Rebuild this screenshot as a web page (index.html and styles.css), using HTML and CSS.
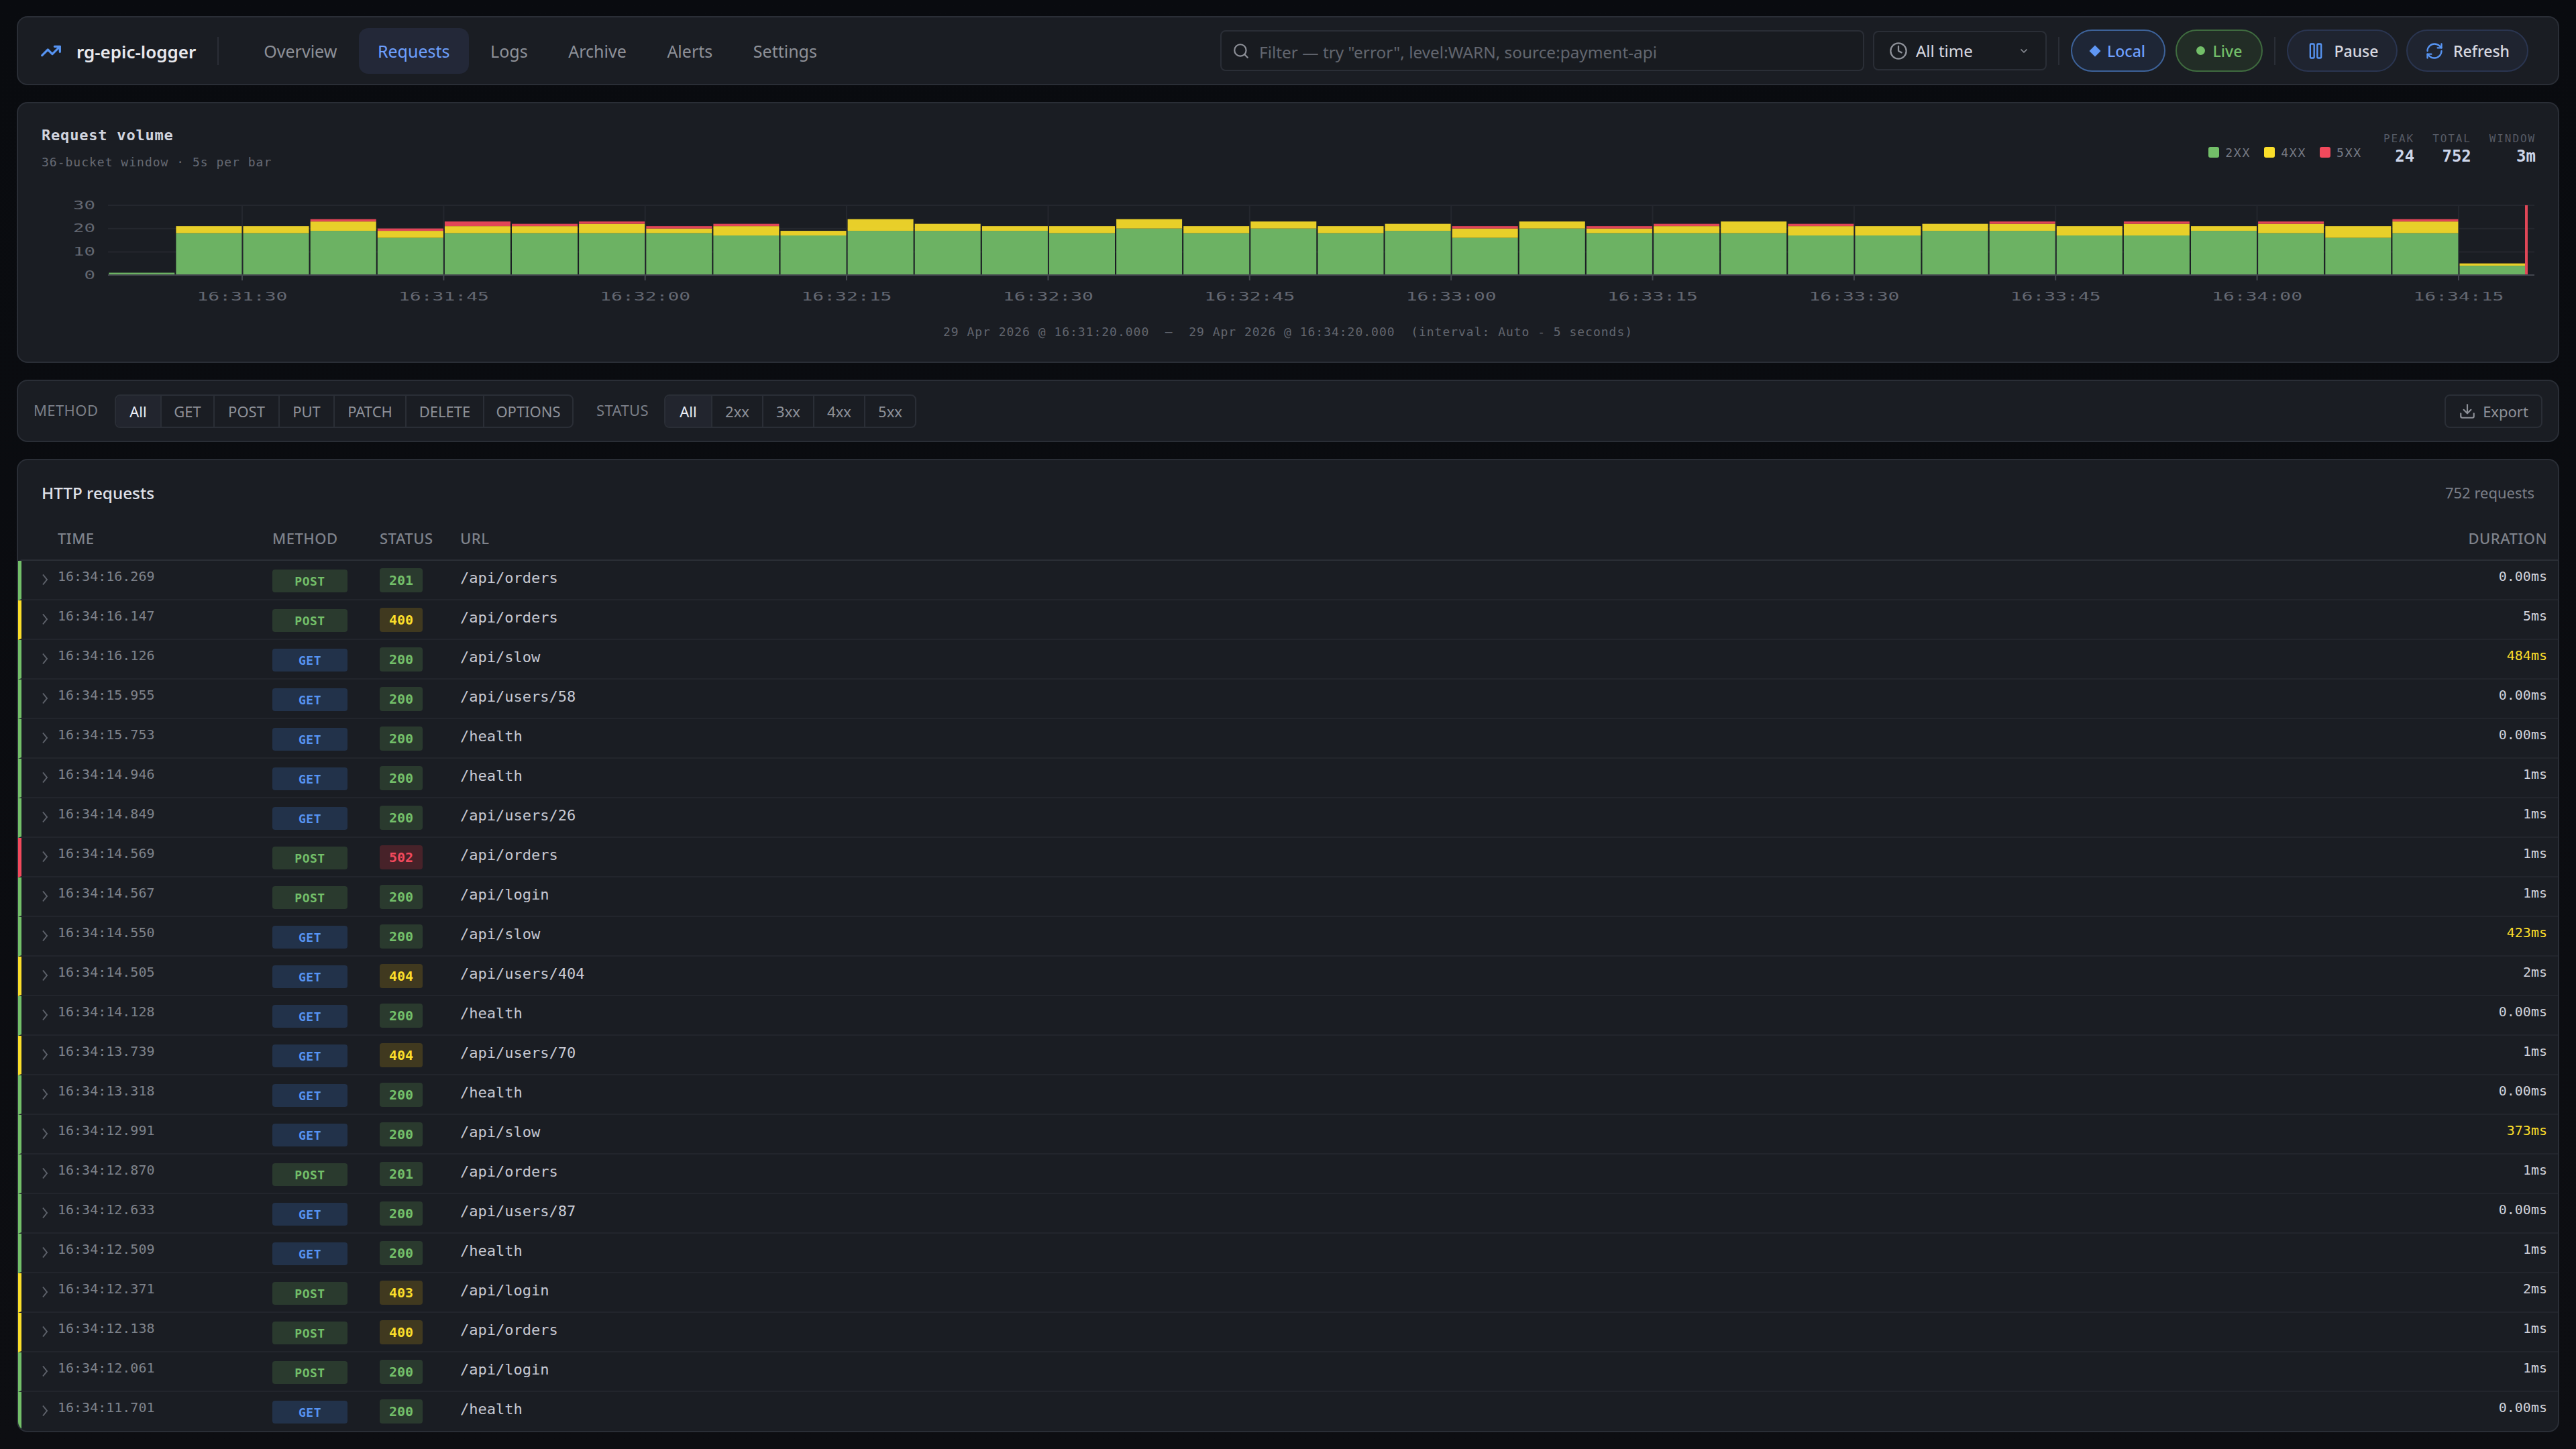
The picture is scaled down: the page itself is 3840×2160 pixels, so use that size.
FILE: index.html
```html
<!DOCTYPE html>
<html lang="en">
<head>
<meta charset="utf-8">
<title>rg-epic-logger</title>
<link rel="stylesheet" href="styles.css">
</head>
<body>
<svg class="defs" width="0" height="0" aria-hidden="true">
  <symbol id="chev" viewBox="0 0 10 18"><path d="M2 1.5 8 9 2 16.500" fill="none" stroke="currentColor" stroke-width="2"/></symbol>
</svg>

<header class="panel topbar">
  <div class="brand">
    <svg class="brand-icon" viewBox="0 0 24 24" fill="none" stroke="currentColor" stroke-width="2.4" stroke-linecap="round" stroke-linejoin="round"><polyline points="22 7 13.500 15.500 8.500 10.500 2 17"/><polyline points="16 7 22 7 22 13"/></svg>
    <span>rg-epic-logger</span>
  </div>
  <div class="divider brand-divider"></div>
  <nav class="nav">
    <a>Overview</a><a class="active">Requests</a><a>Logs</a><a>Archive</a><a>Alerts</a><a>Settings</a>
  </nav>
  <div class="search">
    <svg class="icon-search" viewBox="0 0 24 24" fill="none" stroke="currentColor" stroke-width="2" stroke-linecap="round"><circle cx="11" cy="11" r="8"/><path d="m21 21-4.300-4.300"/></svg>
    <span>Filter — try "error", level:WARN, source:payment-api</span>
  </div>
  <div class="select">
    <svg class="icon-clock" viewBox="0 0 24 24" fill="none" stroke="currentColor" stroke-width="2" stroke-linecap="round" stroke-linejoin="round"><circle cx="12" cy="12" r="10"/><polyline points="12 6 12 12 16 14"/></svg>
    <span>All time</span>
    <svg class="icon-caret" viewBox="0 0 24 24" fill="none" stroke="currentColor" stroke-width="2.500" stroke-linecap="round" stroke-linejoin="round"><path d="m6 9 6 6 6-6"/></svg>
  </div>
  <div class="divider d1"></div>
  <button class="pill local"><i class="diamond"></i>Local</button>
  <button class="pill live"><i class="dot"></i>Live</button>
  <div class="divider d2"></div>
  <button class="pill action pause">
    <svg viewBox="0 0 24 24" fill="none" stroke="#5794f2" stroke-width="2" stroke-linejoin="round"><rect x="5" y="3" width="5" height="18" rx="1"/><rect x="14" y="3" width="5" height="18" rx="1"/></svg>Pause</button>
  <button class="pill action refresh">
    <svg viewBox="0 0 24 24" fill="none" stroke="#5794f2" stroke-width="2" stroke-linecap="round" stroke-linejoin="round"><path d="M3 12a9 9 0 0 1 9-9 9.750 9.750 0 0 1 6.740 2.740L21 8"/><path d="M21 3v5h-5"/><path d="M21 12a9 9 0 0 1-9 9 9.750 9.750 0 0 1-6.740-2.740L3 16"/><path d="M8 16H3v5"/></svg>Refresh</button>
</header>

<section class="panel chart">
  <div class="chart-head">
    <div>
      <h2>Request volume</h2>
      <p>36-bucket window · 5s per bar</p>
    </div>
    <div class="chart-meta">
      <ul class="legend">
        <li><i class="sw-g"></i>2XX</li><li><i class="sw-y"></i>4XX</li><li><i class="sw-r"></i>5XX</li>
      </ul>
      <dl class="stat peak"><dt>PEAK</dt><dd>24</dd></dl>
      <dl class="stat"><dt>TOTAL</dt><dd>752</dd></dl>
      <dl class="stat"><dt>WINDOW</dt><dd>3m</dd></dl>
    </div>
  </div>
  <svg class="plot" viewBox="27 290 3786 180" width="3786" height="180">
    <g class="grid">
      <path d="M161 306H3778M161 340.700H3778M161 375.400H3778"/>
      <path d="M361 306V410M661.400 306V410M961.700 306V410M1262 306V410M1562.500 306V410M1862.800 306V410M2163.200 306V410M2463.500 306V410M2763.900 306V410M3064.200 306V410M3364.600 306V410M3665 306V410"/>
    </g>
    <g transform="translate(0 410) scale(1 -3.47)">
      <rect class="g" x="162.300" width="98" height="1"/>
      <rect class="g" x="262.400" width="98" height="18"/><rect class="y" x="262.400" y="18" width="98" height="3"/>
      <rect class="g" x="362.500" width="98" height="18"/><rect class="y" x="362.500" y="18" width="98" height="3"/>
      <rect class="g" x="462.700" width="98" height="19"/><rect class="y" x="462.700" y="19" width="98" height="4"/><rect class="r" x="462.700" y="23" width="98" height="1"/>
      <rect class="g" x="562.800" width="98" height="16"/><rect class="y" x="562.800" y="16" width="98" height="3"/><rect class="r" x="562.800" y="19" width="98" height="1"/>
      <rect class="g" x="662.900" width="98" height="18"/><rect class="y" x="662.900" y="18" width="98" height="3"/><rect class="r" x="662.900" y="21" width="98" height="2"/>
      <rect class="g" x="763" width="98" height="18"/><rect class="y" x="763" y="18" width="98" height="3"/><rect class="r" x="763" y="21" width="98" height="1"/>
      <rect class="g" x="863.100" width="98" height="18"/><rect class="y" x="863.100" y="18" width="98" height="4"/><rect class="r" x="863.100" y="22" width="98" height="1"/>
      <rect class="g" x="963.300" width="98" height="18"/><rect class="y" x="963.300" y="18" width="98" height="2"/><rect class="r" x="963.300" y="20" width="98" height="1"/>
      <rect class="g" x="1063.400" width="98" height="17"/><rect class="y" x="1063.400" y="17" width="98" height="4"/><rect class="r" x="1063.400" y="21" width="98" height="1"/>
      <rect class="g" x="1163.500" width="98" height="17"/><rect class="y" x="1163.500" y="17" width="98" height="2"/>
      <rect class="g" x="1263.600" width="98" height="19"/><rect class="y" x="1263.600" y="19" width="98" height="5"/>
      <rect class="g" x="1363.700" width="98" height="19"/><rect class="y" x="1363.700" y="19" width="98" height="3"/>
      <rect class="g" x="1463.900" width="98" height="19"/><rect class="y" x="1463.900" y="19" width="98" height="2"/>
      <rect class="g" x="1564" width="98" height="18"/><rect class="y" x="1564" y="18" width="98" height="3"/>
      <rect class="g" x="1664.100" width="98" height="20"/><rect class="y" x="1664.100" y="20" width="98" height="4"/>
      <rect class="g" x="1764.200" width="98" height="18"/><rect class="y" x="1764.200" y="18" width="98" height="3"/>
      <rect class="g" x="1864.300" width="98" height="20"/><rect class="y" x="1864.300" y="20" width="98" height="3"/>
      <rect class="g" x="1964.500" width="98" height="18"/><rect class="y" x="1964.500" y="18" width="98" height="3"/>
      <rect class="g" x="2064.600" width="98" height="19"/><rect class="y" x="2064.600" y="19" width="98" height="3"/>
      <rect class="g" x="2164.700" width="98" height="16"/><rect class="y" x="2164.700" y="16" width="98" height="4"/><rect class="r" x="2164.700" y="20" width="98" height="1"/>
      <rect class="g" x="2264.800" width="98" height="20"/><rect class="y" x="2264.800" y="20" width="98" height="3"/>
      <rect class="g" x="2364.900" width="98" height="18"/><rect class="y" x="2364.900" y="18" width="98" height="2"/><rect class="r" x="2364.900" y="20" width="98" height="1"/>
      <rect class="g" x="2465.100" width="98" height="18"/><rect class="y" x="2465.100" y="18" width="98" height="3"/><rect class="r" x="2465.100" y="21" width="98" height="1"/>
      <rect class="g" x="2565.200" width="98" height="18"/><rect class="y" x="2565.200" y="18" width="98" height="5"/>
      <rect class="g" x="2665.300" width="98" height="17"/><rect class="y" x="2665.300" y="17" width="98" height="4"/><rect class="r" x="2665.300" y="21" width="98" height="1"/>
      <rect class="g" x="2765.400" width="98" height="17"/><rect class="y" x="2765.400" y="17" width="98" height="4"/>
      <rect class="g" x="2865.500" width="98" height="19"/><rect class="y" x="2865.500" y="19" width="98" height="3"/>
      <rect class="g" x="2965.700" width="98" height="19"/><rect class="y" x="2965.700" y="19" width="98" height="3"/><rect class="r" x="2965.700" y="22" width="98" height="1"/>
      <rect class="g" x="3065.800" width="98" height="17"/><rect class="y" x="3065.800" y="17" width="98" height="4"/>
      <rect class="g" x="3165.900" width="98" height="17"/><rect class="y" x="3165.900" y="17" width="98" height="5"/><rect class="r" x="3165.900" y="22" width="98" height="1"/>
      <rect class="g" x="3266" width="98" height="19"/><rect class="y" x="3266" y="19" width="98" height="2"/>
      <rect class="g" x="3366.100" width="98" height="18"/><rect class="y" x="3366.100" y="18" width="98" height="4"/><rect class="r" x="3366.100" y="22" width="98" height="1"/>
      <rect class="g" x="3466.300" width="98" height="16"/><rect class="y" x="3466.300" y="16" width="98" height="5"/>
      <rect class="g" x="3566.400" width="98" height="18"/><rect class="y" x="3566.400" y="18" width="98" height="5"/><rect class="r" x="3566.400" y="23" width="98" height="1"/>
      <rect class="g" x="3666.500" width="97.500" height="4"/><rect class="y" x="3666.500" y="4" width="97.500" height="1"/>
    </g>
    <rect class="now" x="3764" y="306" width="4" height="104"/>
    <g class="axis">
      <path d="M161 410H3778"/>
      <path d="M361 410v8M661.400 410v8M961.700 410v8M1262 410v8M1562.500 410v8M1862.800 410v8M2163.200 410v8M2463.500 410v8M2763.900 410v8M3064.200 410v8M3364.600 410v8M3665 410v8"/>
    </g>
    <g class="ylabels">
      <text x="142" y="312" textLength="33" lengthAdjust="spacingAndGlyphs">30</text>
      <text x="142" y="346" textLength="33" lengthAdjust="spacingAndGlyphs">20</text>
      <text x="142" y="381" textLength="33" lengthAdjust="spacingAndGlyphs">10</text>
      <text x="142" y="416" textLength="16.500" lengthAdjust="spacingAndGlyphs">0</text>
    </g>
    <g class="xlabels">
      <text x="361" y="448" textLength="135" lengthAdjust="spacingAndGlyphs">16:31:30</text>
      <text x="661.400" y="448" textLength="135" lengthAdjust="spacingAndGlyphs">16:31:45</text>
      <text x="961.700" y="448" textLength="135" lengthAdjust="spacingAndGlyphs">16:32:00</text>
      <text x="1262" y="448" textLength="135" lengthAdjust="spacingAndGlyphs">16:32:15</text>
      <text x="1562.500" y="448" textLength="135" lengthAdjust="spacingAndGlyphs">16:32:30</text>
      <text x="1862.800" y="448" textLength="135" lengthAdjust="spacingAndGlyphs">16:32:45</text>
      <text x="2163.200" y="448" textLength="135" lengthAdjust="spacingAndGlyphs">16:33:00</text>
      <text x="2463.500" y="448" textLength="135" lengthAdjust="spacingAndGlyphs">16:33:15</text>
      <text x="2763.900" y="448" textLength="135" lengthAdjust="spacingAndGlyphs">16:33:30</text>
      <text x="3064.200" y="448" textLength="135" lengthAdjust="spacingAndGlyphs">16:33:45</text>
      <text x="3364.600" y="448" textLength="135" lengthAdjust="spacingAndGlyphs">16:34:00</text>
      <text x="3665" y="448" textLength="135" lengthAdjust="spacingAndGlyphs">16:34:15</text>
    </g>
  </svg>
  <p class="chart-foot">29 Apr 2026 @ 16:31:20.000 &nbsp;—&nbsp; 29 Apr 2026 @ 16:34:20.000 &nbsp;(interval: Auto - 5 seconds)</p>
</section>

<section class="panel filters">
  <span class="filter-label">METHOD</span>
  <div class="seg method-seg"><button class="on">All</button><button>GET</button><button>POST</button><button>PUT</button><button>PATCH</button><button>DELETE</button><button>OPTIONS</button></div>
  <span class="filter-label status-label">STATUS</span>
  <div class="seg status-seg"><button class="on">All</button><button>2xx</button><button>3xx</button><button>4xx</button><button>5xx</button></div>
  <button class="export">
    <svg viewBox="0 0 24 24" fill="none" stroke="currentColor" stroke-width="2" stroke-linecap="round" stroke-linejoin="round"><path d="M21 15v4a2 2 0 0 1-2 2H5a2 2 0 0 1-2-2v-4"/><polyline points="7 10 12 15 17 10"/><line x1="12" y1="15" x2="12" y2="3"/></svg>Export</button>
</section>

<section class="panel requests">
  <div class="req-head"><h2>HTTP requests</h2><span>752 requests</span></div>
  <div class="row thead"><span></span><span>TIME</span><span>METHOD</span><span>STATUS</span><span>URL</span><span class="dur-h">DURATION</span></div>
  <div class="row l-g"><svg class="chev"><use href="#chev"/></svg><span class="time">16:34:16.269</span><span class="m post">POST</span><span class="s ok">201</span><span class="url">/api/orders</span><span class="dur">0.00ms</span></div>
  <div class="row l-y"><svg class="chev"><use href="#chev"/></svg><span class="time">16:34:16.147</span><span class="m post">POST</span><span class="s warn">400</span><span class="url">/api/orders</span><span class="dur">5ms</span></div>
  <div class="row l-g"><svg class="chev"><use href="#chev"/></svg><span class="time">16:34:16.126</span><span class="m get">GET</span><span class="s ok">200</span><span class="url">/api/slow</span><span class="dur slow">484ms</span></div>
  <div class="row l-g"><svg class="chev"><use href="#chev"/></svg><span class="time">16:34:15.955</span><span class="m get">GET</span><span class="s ok">200</span><span class="url">/api/users/58</span><span class="dur">0.00ms</span></div>
  <div class="row l-g"><svg class="chev"><use href="#chev"/></svg><span class="time">16:34:15.753</span><span class="m get">GET</span><span class="s ok">200</span><span class="url">/health</span><span class="dur">0.00ms</span></div>
  <div class="row l-g"><svg class="chev"><use href="#chev"/></svg><span class="time">16:34:14.946</span><span class="m get">GET</span><span class="s ok">200</span><span class="url">/health</span><span class="dur">1ms</span></div>
  <div class="row l-g"><svg class="chev"><use href="#chev"/></svg><span class="time">16:34:14.849</span><span class="m get">GET</span><span class="s ok">200</span><span class="url">/api/users/26</span><span class="dur">1ms</span></div>
  <div class="row l-r"><svg class="chev"><use href="#chev"/></svg><span class="time">16:34:14.569</span><span class="m post">POST</span><span class="s err">502</span><span class="url">/api/orders</span><span class="dur">1ms</span></div>
  <div class="row l-g"><svg class="chev"><use href="#chev"/></svg><span class="time">16:34:14.567</span><span class="m post">POST</span><span class="s ok">200</span><span class="url">/api/login</span><span class="dur">1ms</span></div>
  <div class="row l-g"><svg class="chev"><use href="#chev"/></svg><span class="time">16:34:14.550</span><span class="m get">GET</span><span class="s ok">200</span><span class="url">/api/slow</span><span class="dur slow">423ms</span></div>
  <div class="row l-y"><svg class="chev"><use href="#chev"/></svg><span class="time">16:34:14.505</span><span class="m get">GET</span><span class="s warn">404</span><span class="url">/api/users/404</span><span class="dur">2ms</span></div>
  <div class="row l-g"><svg class="chev"><use href="#chev"/></svg><span class="time">16:34:14.128</span><span class="m get">GET</span><span class="s ok">200</span><span class="url">/health</span><span class="dur">0.00ms</span></div>
  <div class="row l-y"><svg class="chev"><use href="#chev"/></svg><span class="time">16:34:13.739</span><span class="m get">GET</span><span class="s warn">404</span><span class="url">/api/users/70</span><span class="dur">1ms</span></div>
  <div class="row l-g"><svg class="chev"><use href="#chev"/></svg><span class="time">16:34:13.318</span><span class="m get">GET</span><span class="s ok">200</span><span class="url">/health</span><span class="dur">0.00ms</span></div>
  <div class="row l-g"><svg class="chev"><use href="#chev"/></svg><span class="time">16:34:12.991</span><span class="m get">GET</span><span class="s ok">200</span><span class="url">/api/slow</span><span class="dur slow">373ms</span></div>
  <div class="row l-g"><svg class="chev"><use href="#chev"/></svg><span class="time">16:34:12.870</span><span class="m post">POST</span><span class="s ok">201</span><span class="url">/api/orders</span><span class="dur">1ms</span></div>
  <div class="row l-g"><svg class="chev"><use href="#chev"/></svg><span class="time">16:34:12.633</span><span class="m get">GET</span><span class="s ok">200</span><span class="url">/api/users/87</span><span class="dur">0.00ms</span></div>
  <div class="row l-g"><svg class="chev"><use href="#chev"/></svg><span class="time">16:34:12.509</span><span class="m get">GET</span><span class="s ok">200</span><span class="url">/health</span><span class="dur">1ms</span></div>
  <div class="row l-y"><svg class="chev"><use href="#chev"/></svg><span class="time">16:34:12.371</span><span class="m post">POST</span><span class="s warn">403</span><span class="url">/api/login</span><span class="dur">2ms</span></div>
  <div class="row l-y"><svg class="chev"><use href="#chev"/></svg><span class="time">16:34:12.138</span><span class="m post">POST</span><span class="s warn">400</span><span class="url">/api/orders</span><span class="dur">1ms</span></div>
  <div class="row l-g"><svg class="chev"><use href="#chev"/></svg><span class="time">16:34:12.061</span><span class="m post">POST</span><span class="s ok">200</span><span class="url">/api/login</span><span class="dur">1ms</span></div>
  <div class="row l-g last"><svg class="chev"><use href="#chev"/></svg><span class="time">16:34:11.701</span><span class="m get">GET</span><span class="s ok">200</span><span class="url">/health</span><span class="dur">0.00ms</span></div>
</section>
</body>
</html>
```

FILE: styles.css
```css
* { box-sizing: border-box; }
html, body { margin: 0; height: 100%; }
body {
  width: 3840px; height: 2160px; overflow: hidden;
  padding: 24px 25px 25px;
  display: flex; flex-direction: column; gap: 25px;
  background: linear-gradient(180deg, #090b0f, #0d0e12);
  font-family: "Noto Sans", "Open Sans", sans-serif;
  color: #d8d9da;
}
button { font: inherit; color: inherit; background: none; border: 0; padding: 0; }
h2, p, ul, dl, dd { margin: 0; padding: 0; }
.defs { position: absolute; }
.panel { background: #1a1d23; border: 2px solid #2a2e36; border-radius: 16px; }

/* top bar */
.topbar { display: flex; align-items: center; height: 103px; padding: 0 44px 0 33px; flex: none; }
.brand { display: flex; align-items: center; gap: 22px; font-size: 26px; font-weight: 600; color: #e8e9ee; }
.brand span { padding-top: 2px; }
.brand-icon { width: 32px; height: 32px; color: #5794f2; flex: none; }
.divider { width: 2px; height: 42px; background: #2a2e36; flex: none; }
.brand-divider { margin-left: 32px; }
.nav { display: flex; gap: 4.6px; margin-left: 39px; font-size: 25px; color: #8e9199; }
.nav a { height: 68px; line-height: 68px; padding: 0 28px; border-radius: 14px; }
.nav a.active { background: #232838; color: #6ea0ff; }
.search {
  margin-left: auto; width: 960px; height: 61px; display: flex; align-items: center; gap: 14px;
  padding: 0 16px; background: #181b20; border: 2px solid #2a2e36; border-radius: 8px;
  font-size: 24.400px; color: #62666f;
}
.search span { padding-top: 3px; }
.icon-search { width: 26px; height: 26px; color: #8e9199; flex: none; }
.select {
  margin-left: 13px; width: 259px; height: 59px; display: flex; align-items: center; gap: 12px;
  padding: 0 24px 0 22px; border: 2px solid #2a2e36; border-radius: 8px;
  font-size: 24px; color: #d8d9e0; background: #181b20;
}
.icon-clock { width: 28px; height: 28px; color: #8e9199; flex: none; }
.icon-caret { width: 16px; height: 16px; color: #8e9199; margin-left: auto; flex: none; }
.d1 { margin-left: 17px; }
.pill {
  height: 63px; border-radius: 32px; border: 2px solid; display: flex; align-items: center; justify-content: center;
  gap: 12px; font-size: 23px; font-weight: 500; flex: none;
}
.local { margin-left: 17px; width: 141px; background: #1e2636; border-color: #3d6299; color: #6ea0ff; }
.live { margin-left: 15px; width: 130px; background: #222d26; border-color: #3f6b3f; color: #73bf69; }
.d2 { margin-left: 17px; }
.action { background: #1f2430; border-color: #2a3550; color: #d8d9e0; gap: 14px; }
.action svg { width: 28px; height: 28px; flex: none; }
.pause { margin-left: 17px; width: 165px; }
.refresh { margin-left: 13px; width: 182px; }
.diamond { width: 12px; height: 12px; background: #5f97f5; transform: rotate(45deg); }
.dot { width: 13px; height: 13px; border-radius: 50%; background: #73bf69; }

/* chart */
.chart { flex: none; height: 389px; }
.chart-head { display: flex; justify-content: space-between; height: 136px; padding: 33px 33px 0 35px; }
.chart-head h2 {
  font: 700 22px/30px "DejaVu Sans Mono", monospace; letter-spacing: 0.8px; color: #d0d4de;
}
.chart-head p {
  margin-top: 13px; font: 400 18px/24px "DejaVu Sans Mono", monospace; letter-spacing: 1px; color: #666a74;
}
.chart-meta { display: flex; font-family: "DejaVu Sans Mono", monospace; height: 70px; margin-top: 9px; }
.legend { display: flex; gap: 20px; list-style: none; font-size: 18px; letter-spacing: 1.8px; color: #777b85; margin-top: 19px; }
.legend li { display: flex; align-items: center; gap: 9px; height: 24px; }
.legend i { width: 16px; height: 16px; border-radius: 3px; }
.sw-g { background: #73bf69; }
.sw-y { background: #fade2a; }
.sw-r { background: #f2495c; }
.stat { display: flex; flex-direction: column; align-items: flex-end; margin-left: 27px; }
.peak { margin-left: 32px; }
.stat dt { font-size: 16px; line-height: 22px; letter-spacing: 1.9px; color: #565a64; }
.stat dd { font-size: 24px; line-height: 30px; font-weight: 700; color: #cdd6ea; }
.plot { display: block; }
.grid path { stroke: #24272e; stroke-width: 2; fill: none; }
.g { fill: #73bf69; fill-opacity: 0.92; }
.y { fill: #fade2a; fill-opacity: 0.92; }
.r { fill: #f2495c; fill-opacity: 0.92; }
.now { fill: #e04657; }
.axis path { stroke: #43464e; stroke-width: 2; fill: none; }
.ylabels text, .xlabels text { font: 18px "DejaVu Sans Mono", monospace; fill: #636771; }
.ylabels text { text-anchor: end; }
.xlabels text { text-anchor: middle; }
.chart-foot {
  margin-top: 11px; text-align: center; font: 18px/28px "DejaVu Sans Mono", monospace; letter-spacing: 0.98px; color: #62666f;
}

/* filters */
.filters { flex: none; height: 93px; display: flex; align-items: center; padding: 0 23px; }
.filter-label { font-size: 22px; letter-spacing: 0.4px; color: #7b7f88; width: 96px; flex: none; padding-bottom: 4px; }
.status-label { margin-left: 34px; width: 76px; }
.seg { display: flex; height: 50px; border: 2px solid #2a2e36; border-radius: 8px; overflow: hidden; flex: none; margin-left: 25px; font-size: 22px; color: #8e9199; }
.seg button { border-left: 2px solid #2a2e36; }
.seg button:first-child { border-left: 0; }
.seg .on { background: #22252e; color: #eef0f6; }
.method-seg button:nth-child(1) { width: 66px; }
.method-seg button:nth-child(2) { width: 79px; }
.method-seg button:nth-child(3) { width: 97px; }
.method-seg button:nth-child(4) { width: 82px; }
.method-seg button:nth-child(5) { width: 107px; }
.method-seg button:nth-child(6) { width: 116px; }
.method-seg button:nth-child(7) { width: 133px; }
.status-seg button { width: 76px; }
.status-seg button:first-child { width: 68px; }
.export {
  margin-left: auto; width: 146px; height: 50px; display: flex; align-items: center; justify-content: center; gap: 10px;
  border: 2px solid #2a2e36; border-radius: 8px; font-size: 22px; color: #8e9199;
}
.export svg { width: 26px; height: 26px; }

/* table */
.requests { flex: 1; overflow: hidden; }
.req-head { display: flex; justify-content: space-between; align-items: center; height: 96px; padding: 0 35px; }
.req-head h2 { font-size: 24.300px; font-weight: 500; color: #e0e2ea; }
.req-head span { font-size: 22px; color: #7b7f88; }
.row {
  display: grid; grid-template-columns: 54px 320px 160px 120px 1fr 0;
  height: 59px; border-left: 5px solid transparent; border-bottom: 2px solid #22252c; padding-left: 0; align-items: start;
}
.row > :first-child { margin-left: 30px; }
.thead { height: 54px; border-bottom-color: #2a2e36; font-size: 22px; letter-spacing: 0.5px; font-weight: 500; color: #7f838c; line-height: 40px; padding-top: 0; }
.dur-h { grid-column: 5 / 7; justify-self: end; padding-right: 16px; }
.thead > :nth-child(5) { grid-column: 5; grid-row: 1; }
.thead > :nth-child(6) { grid-column: 5; grid-row: 1; }
.l-g { border-left-color: #73bf69; }
.l-y { border-left-color: #fade2a; }
.l-r { border-left-color: #f2495c; }
.last { border-bottom: 0; }
.chev { width: 10px; height: 18px; margin-top: 19px; color: #5e626b; }
.time, .url, .dur, .m, .s { font-family: "DejaVu Sans Mono", monospace; }
.time { font-size: 20px; line-height: 24px; padding-top: 11px; color: #7e828b; }
.url { font-size: 22px; line-height: 26px; padding-top: 13px; color: #c7c9d3; }
.dur { font-size: 20px; line-height: 24px; padding-top: 11px; color: #d0d2dc; justify-self: end; padding-right: 16px; }
.slow { color: #fade2a; }
.m, .s { display: flex; align-items: center; justify-content: center; border-radius: 4px; font-weight: 700; }
.m { width: 112px; height: 34px; margin-top: 13px; font-size: 18px; letter-spacing: 0.5px; }
.s { width: 64px; height: 36px; margin-top: 11px; font-size: 20px; }
.post { background: #2a3a2e; color: #73bf69; }
.get { background: #22324a; color: #5794f2; }
.ok { background: #2a3a2e; color: #73bf69; }
.warn { background: #40391f; color: #fade2a; }
.err { background: #472229; color: #f2495c; }
```
